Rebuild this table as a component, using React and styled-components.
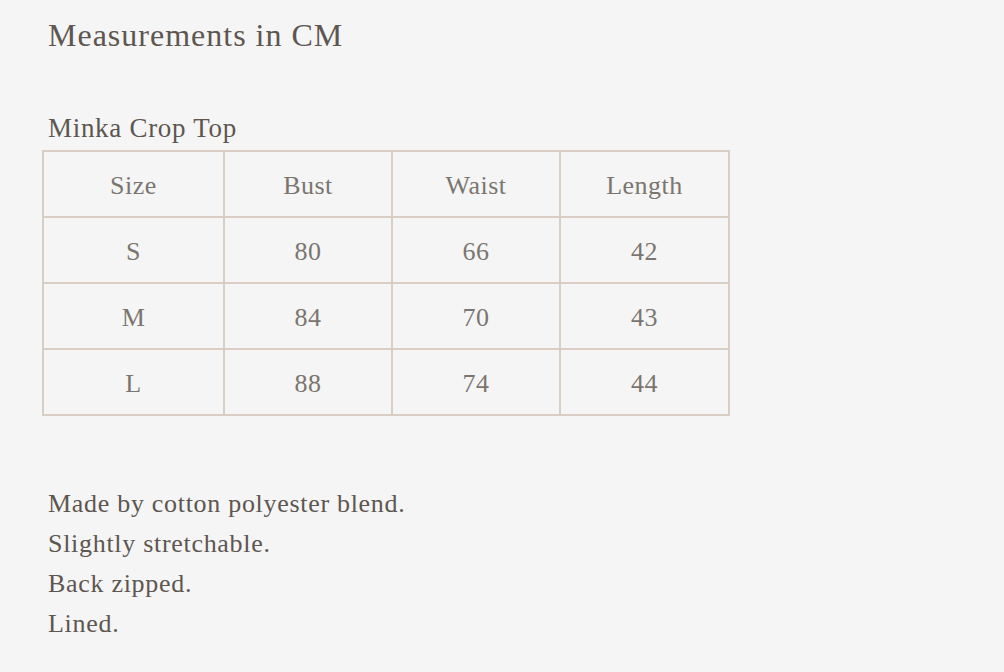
import React from "react";
import styled, { createGlobalStyle } from "styled-components";

const Global = createGlobalStyle`
  html, body { margin: 0; padding: 0; background: #f5f5f5; }
  body { font-family: "Liberation Serif", "Times New Roman", serif; }
`;

const Page = styled.div`
  padding: 15px 0 0 48px;
  color: #5e5650;
`;

const Title = styled.h1`
  margin: 0;
  font-weight: normal;
  font-size: 32px;
  line-height: 40px;
  letter-spacing: 1px;
`;

const Subtitle = styled.h2`
  margin: 57px 0 0;
  font-weight: normal;
  font-size: 27px;
  line-height: 32px;
  letter-spacing: 0.7px;
`;

const Table = styled.table`
  margin: 6px 0 0 -6px;
  border-collapse: collapse;
  border: 2px solid #d8cec4;
`;

const Cell = styled.td`
  border: 2px solid #d8cec4;
  width: ${(p) => p.$w}px;
  height: 61px;
  padding: 3px 0 0;
  text-align: center;
  font-size: 26px;
  letter-spacing: 0.5px;
  color: #7b7570;
`;

const Notes = styled.div`
  margin-top: 68px;
  font-size: 26px;
  line-height: 40px;
  letter-spacing: 0.7px;
`;

const widths = [179, 166, 166, 167];
const rows = [
  ["Size", "Bust", "Waist", "Length"],
  ["S", "80", "66", "42"],
  ["M", "84", "70", "43"],
  ["L", "88", "74", "44"],
];

export default function App() {
  return (
    <>
      <Global />
      <Page>
        <Title>Measurements in CM</Title>
        <Subtitle>Minka Crop Top</Subtitle>
        <Table>
          <tbody>
            {rows.map((r, i) => (
              <tr key={i}>
                {r.map((c, j) => (
                  <Cell key={j} $w={widths[j]}>{c}</Cell>
                ))}
              </tr>
            ))}
          </tbody>
        </Table>
        <Notes>
          <div>Made by cotton polyester blend.</div>
          <div>Slightly stretchable.</div>
          <div>Back zipped.</div>
          <div>Lined.</div>
        </Notes>
      </Page>
    </>
  );
}
